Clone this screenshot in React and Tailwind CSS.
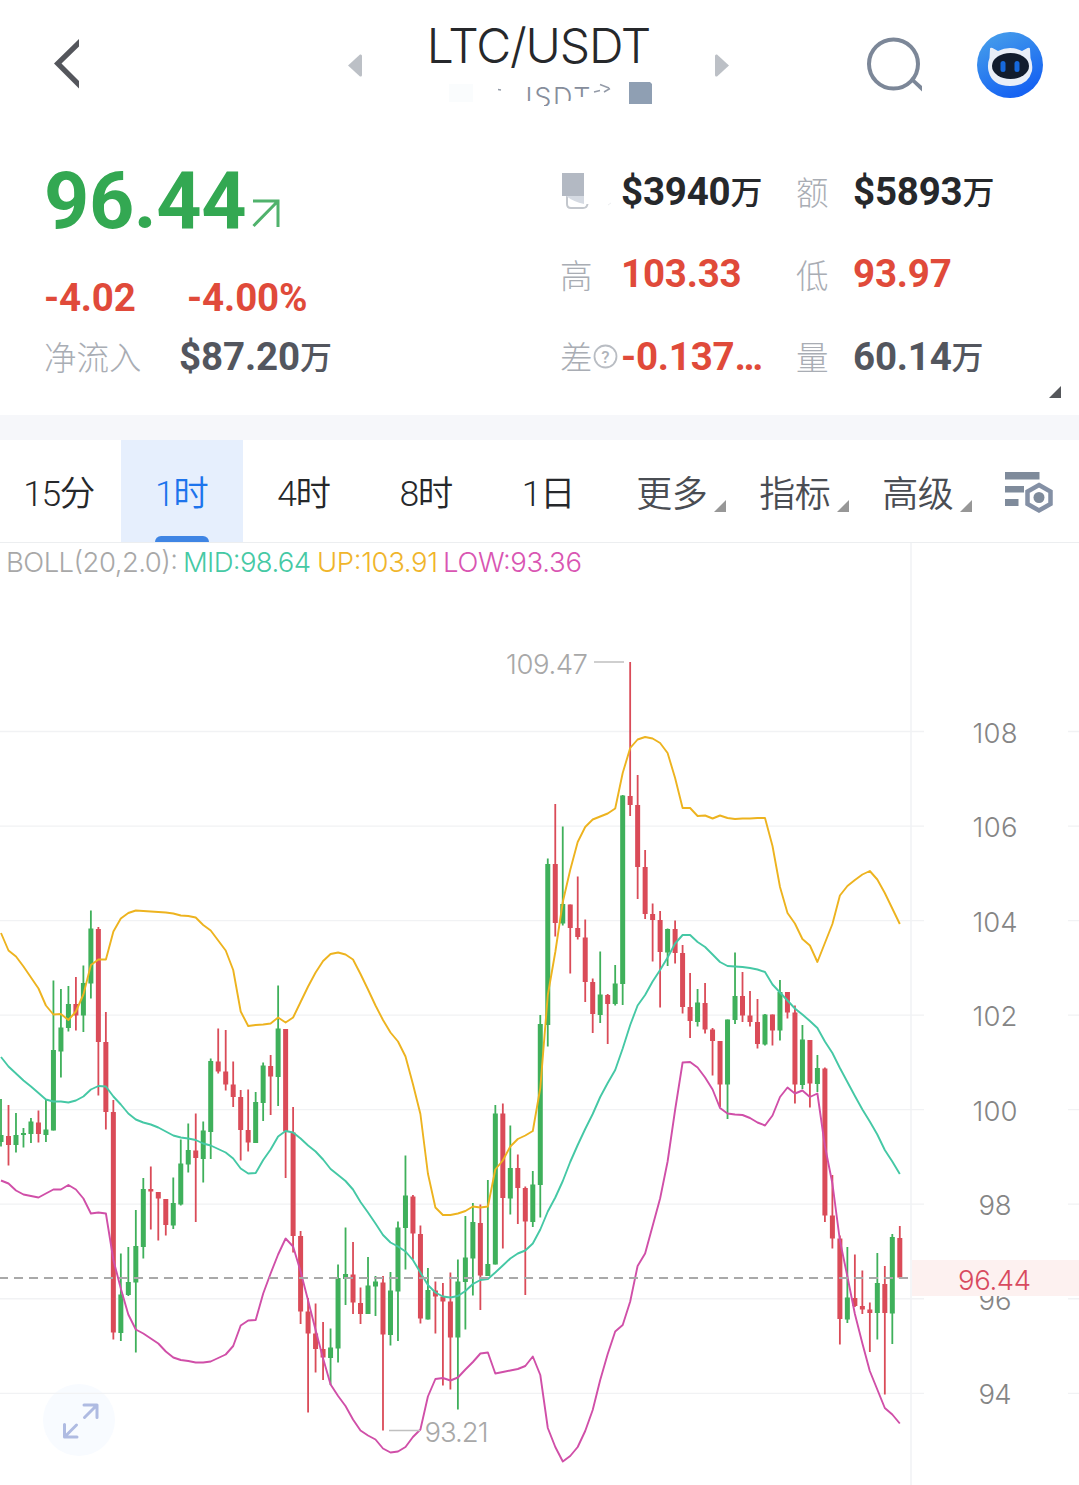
const tabs = ['15分', '1时', '4时', '8时', '1日'];
const menus = ['更多', '指标', '高级'];

// x of the first candle and the distance between two candles
const START = 1;
const STEP = 7.49;

// [direction, high, body top, body bottom, low]
const candles = [
  ['u', 1099, 1135, 1142, 1146.5], ['d', 1105, 1136, 1145, 1165.5], ['u', 1113, 1135, 1145, 1152.5],
  ['u', 1128, 1133, 1135, 1147.5], ['u', 1118, 1121.5, 1134, 1143], ['d', 1110.5, 1122.5, 1134, 1142.5],
  ['u', 1100, 1129.5, 1135, 1142], ['u', 980.5, 1050, 1130.5, 1130.5], ['u', 989, 1027.5, 1051.5, 1077.5],
  ['u', 986, 1004, 1028, 1031.5], ['d', 977, 1004, 1015.5, 1030.5], ['u', 965.5, 983, 1015.5, 1032],
  ['u', 910.5, 928.5, 983.5, 998.5], ['d', 927, 929, 1042, 1095.5], ['d', 1012, 1042, 1112, 1129.5],
  ['d', 1100, 1112, 1332.5, 1339.5], ['u', 1253.5, 1294.5, 1333, 1341], ['u', 1247, 1282, 1295, 1296],
  ['u', 1210, 1246, 1282.5, 1352.5], ['u', 1178, 1189, 1247, 1258.5], ['d', 1166.5, 1189, 1191.5, 1229.5],
  ['d', 1192, 1192, 1198.5, 1240.5], ['d', 1199, 1199, 1225, 1235.5], ['u', 1177.5, 1203, 1225.5, 1229],
  ['u', 1139.5, 1163.5, 1204.5, 1205.5], ['u', 1123.5, 1150, 1164.5, 1172.5], ['d', 1113.5, 1150.5, 1158, 1222],
  ['u', 1121.5, 1130.5, 1159, 1182.5], ['u', 1058.5, 1061, 1132, 1159], ['d', 1028.5, 1061.5, 1071.5, 1073.5],
  ['d', 1030, 1071.5, 1084.5, 1090.5], ['d', 1061.5, 1084.5, 1097, 1107], ['d', 1090, 1097, 1130, 1160.5],
  ['d', 1089.5, 1130, 1142.5, 1151.5], ['u', 1092, 1102, 1143, 1143], ['u', 1062.5, 1065.5, 1103, 1121],
  ['d', 1055, 1066, 1076.5, 1115], ['u', 985.5, 1028.5, 1077, 1106], ['d', 1029, 1029, 1131.5, 1178],
  ['d', 1107, 1132.5, 1236, 1252.5], ['d', 1231, 1236, 1311.5, 1324], ['d', 1298, 1311.5, 1333.5, 1412.5],
  ['d', 1303.5, 1333.5, 1349, 1372.5], ['d', 1322, 1349, 1357.5, 1380], ['u', 1328.5, 1347.5, 1358, 1385],
  ['u', 1264.5, 1278, 1348.5, 1362.5], ['u', 1227.5, 1274, 1279, 1305], ['d', 1242, 1274.5, 1302.5, 1314],
  ['d', 1287.5, 1303, 1314, 1324], ['u', 1257, 1285.5, 1314, 1314], ['u', 1276, 1281.5, 1286.5, 1316],
  ['d', 1276, 1282.5, 1334.5, 1430.5], ['u', 1272, 1290.5, 1335, 1345.5], ['u', 1221.5, 1227.5, 1291.5, 1341],
  ['u', 1155.5, 1195.5, 1228, 1269.5], ['d', 1195, 1196.5, 1233.5, 1259.5], ['d', 1225.5, 1234, 1318.5, 1323.5],
  ['u', 1268, 1290, 1319.5, 1319.5], ['d', 1281.5, 1290.5, 1296.5, 1333.5], ['d', 1283, 1296.5, 1301.5, 1385.5],
  ['d', 1272.5, 1301.5, 1337.5, 1389.5], ['u', 1259.5, 1281.5, 1337.5, 1409.5], ['u', 1216, 1257.5, 1282, 1329.5],
  ['u', 1203, 1222, 1258.5, 1295.5], ['d', 1204.5, 1223, 1275.5, 1310], ['u', 1180, 1264, 1276, 1276],
  ['u', 1105, 1113.5, 1264.5, 1264.5], ['d', 1103.5, 1113.5, 1198, 1248.5], ['u', 1125.5, 1168, 1198.5, 1214.5],
  ['d', 1154.5, 1168, 1188, 1224], ['d', 1186.5, 1188, 1221.5, 1295], ['u', 1171, 1184.5, 1222, 1227],
  ['u', 1015, 1024, 1185, 1217.5], ['u', 858.5, 864, 1025, 1046.5], ['d', 804, 864, 923, 936.5],
  ['u', 826.5, 904, 923.5, 925.5], ['d', 904.5, 904.5, 928, 973.5], ['d', 876.5, 928, 937, 939.5],
  ['d', 919.5, 937.5, 982, 1002], ['d', 978.5, 982, 1014, 1033], ['u', 951.5, 994.5, 1015, 1023],
  ['d', 994, 995, 1004, 1044], ['u', 965, 983.5, 1004, 1005.5], ['u', 795, 795.5, 984, 1005],
  ['d', 662, 796, 805, 816], ['d', 775, 805, 867, 899], ['d', 850, 867, 914, 919],
  ['d', 903.5, 914, 920, 961.5], ['d', 911, 920, 952, 1007.5], ['u', 928.5, 929, 952.5, 966],
  ['d', 920.5, 929, 953, 963.5], ['d', 945, 953, 1007, 1013.5], ['d', 973, 1007, 1021, 1038],
  ['u', 989, 1002.5, 1022, 1026.5], ['d', 983, 1003, 1029.5, 1033.5], ['d', 1028, 1029.5, 1041, 1075.5],
  ['d', 1041, 1041, 1084.5, 1107], ['u', 1019.5, 1019.5, 1084.5, 1119], ['u', 952.5, 996, 1020, 1024],
  ['d', 972, 996, 1015.5, 1022], ['d', 991, 1015.5, 1022, 1026.5], ['d', 999, 1022, 1044, 1048.5],
  ['u', 1014, 1014.5, 1044.5, 1045.5], ['d', 1014.5, 1014.5, 1030.5, 1045.5], ['u', 980, 992, 1030.5, 1040.5],
  ['d', 992, 992, 1012.5, 1018.5], ['d', 1005.5, 1012.5, 1084.5, 1103.5], ['u', 1025, 1039.5, 1085, 1089],
  ['d', 1040, 1040, 1083.5, 1107.5], ['u', 1055, 1068, 1084, 1092], ['d', 1067.5, 1068.5, 1215.5, 1222],
  ['d', 1175, 1215.5, 1238.5, 1248.5], ['d', 1235.5, 1238.5, 1319, 1344.5], ['u', 1247, 1297.5, 1319.5, 1323],
  ['d', 1254.5, 1298, 1306, 1307], ['d', 1270.5, 1306, 1309.5, 1314], ['d', 1302.5, 1309.5, 1313, 1352],
  ['u', 1253, 1283, 1313, 1339.5], ['d', 1266, 1284, 1313, 1394.5], ['u', 1234, 1237, 1313.5, 1344],
  ['d', 1226, 1238, 1277.5, 1279],
];

const upper = [
  933, 950.5, 956.5, 966.5, 977.5, 988.5, 1005.5, 1014.5, 1014, 1020, 1011.5, 994.5, 965, 959.5, 959.5, 931.5, 918.5, 913,
  910.5, 911, 911.5, 912, 912.5, 913.5, 915.5, 916, 917.5, 925, 930.5, 940.5, 950.5, 970, 1011.5, 1026, 1025, 1024.5, 1023.5,
  1017.5, 1022.5, 1017.5, 1002, 986.5, 972.5, 961, 954, 952.5, 954.5, 959.5, 974, 989.5, 1005.5, 1020, 1032.5, 1041.5, 1056.5,
  1084, 1114, 1173.5, 1207.5, 1215, 1215, 1213.5, 1211, 1206.5, 1207.5, 1206.5, 1169.5, 1160.5, 1146.5, 1139, 1135.5, 1131,
  1088, 995, 952, 902, 870, 842, 827, 819.5, 816.5, 813.5, 808.5, 773, 748, 739.5, 737, 738.5, 743, 753, 778, 808, 808,
  816, 815.5, 818.5, 815.5, 818, 819, 818.5, 818.5, 818, 818, 846, 887, 913, 923.5, 939, 945.5, 962, 943, 924, 895.5, 886,
  880, 874.5, 871, 879.5, 893, 908.5, 924,
];

const middle = [
  1057, 1066.5, 1073.5, 1080.5, 1086.5, 1093, 1099.5, 1101.5, 1101.5, 1102.5, 1100.5, 1096.5, 1089.5, 1086, 1086.5, 1096.5,
  1104.5, 1113.5, 1119.5, 1122.5, 1124.5, 1127.5, 1131.5, 1135.5, 1137.5, 1138.5, 1140, 1143.5, 1145.5, 1149, 1152.5, 1158.5,
  1168.5, 1173.5, 1173, 1160, 1149.5, 1136.5, 1131, 1132.5, 1138.5, 1145.5, 1151.5, 1159.5, 1169, 1175, 1181, 1189.5, 1202,
  1212.5, 1223.5, 1235, 1242.5, 1246.5, 1251.5, 1260, 1272.5, 1285, 1292.5, 1296.5, 1297.5, 1296, 1291, 1284, 1280, 1279,
  1272.5, 1265.5, 1258.5, 1253.5, 1250.5, 1243.5, 1229.5, 1211.5, 1197.5, 1181, 1162, 1145, 1129, 1114, 1097, 1083, 1070,
  1048.5, 1025, 1005.5, 995, 981.5, 970, 957.5, 943.5, 935, 935, 942, 947, 954.5, 962, 966, 966.5, 967, 968, 969.5, 972,
  984.5, 992.5, 1000.5, 1008.5, 1014.5, 1021, 1028, 1041.5, 1053, 1068, 1082, 1096, 1109.5, 1121.5, 1134.5, 1150, 1161.5, 1174,
];

const lower = [
  1180.5, 1183.5, 1190.5, 1194.5, 1196, 1197.5, 1193.5, 1189.5, 1189.5, 1185, 1189.5, 1198.5, 1213.5, 1212.5, 1213.5, 1260,
  1288.5, 1314.5, 1329.5, 1333.5, 1338.5, 1343.5, 1351.5, 1357.5, 1360, 1361, 1362.5, 1362.5, 1361.5, 1358, 1354.5, 1346,
  1325.5, 1320.5, 1320, 1293.5, 1273.5, 1254.5, 1238.5, 1246.5, 1271.5, 1300.5, 1330, 1358.5, 1384.5, 1396, 1406, 1419.5,
  1430.5, 1435.5, 1439.5, 1448.5, 1452.5, 1451.5, 1447, 1437, 1429.5, 1396.5, 1379, 1378, 1380.5, 1377.5, 1369.5, 1362,
  1353.5, 1352.5, 1373.5, 1372, 1370.5, 1369, 1366, 1356.5, 1375, 1428, 1447, 1461.5, 1456, 1447, 1431, 1410, 1380, 1354, 1331.5,
  1325, 1301.5, 1266, 1253.5, 1226, 1198.5, 1161.5, 1110, 1062.5, 1062, 1067.5, 1077.5, 1089.5, 1108, 1113.5, 1114.5, 1115,
  1118, 1122.5, 1125.5, 1115.5, 1097, 1087.5, 1093.5, 1090.5, 1097, 1093.5, 1146, 1183.5, 1240.5, 1276.5, 1314, 1343.5, 1371,
  1389.5, 1408, 1414.5, 1423.5,
];

const levels = [108, 106, 104, 102, 100, 98, 96, 94];
const levelY = (level) => 731.5 + (108 - level) * 47.27;
const toPoints = (values) => values.map((y, i) => `${(START + i * STEP).toFixed(1)},${y}`).join(' ');

function Header() {
  return (
    <header className="flex h-[130px] items-start">
      <svg className="mt-[36px] ml-[50px]" width="34" height="56" viewBox="50 36 34 56">
        <path d="M79 39V46.500L61.500 63.500L79 81V88.500L54 63.500Z" fill="#54565c" />
      </svg>
      <svg className="mt-[54px] ml-[263px]" width="16" height="24" viewBox="0 0 16 24">
        <path d="M1 11.500L13 0.500Q15 0 15 2V21Q15 23 13 22.500Z" fill="#bcc0c6" />
      </svg>
      <div className="flex w-[351px] flex-col items-center pt-[18px]">
        <h1 className="font-[Inter] text-[48px] leading-[56px] font-light tracking-[-1.1px] whitespace-nowrap text-[#26282b]">LTC/USDT</h1>
        <svg className="mt-1 ml-[22px]" width="240" height="32" viewBox="430 78 240 32">
          <defs>
            <clipPath id="pair">
              <path d="M512 86H518V94H526V101H544V106H551V104H562V101H572V97H592V86Z" />
            </clipPath>
          </defs>
          <rect x="449" y="84" width="24" height="18" fill="#fafcfd" />
          <text x="512.500" y="107" fontSize="27" fontWeight="300" textLength="78" clipPath="url(#pair)" className="font-[Inter]" fill="#868d9b">USDT</text>
          <path d="M498 89.500L501 90M594 92L600 90.500M600 84.500L609 88M604 92L610 88.500" stroke="#949ba8" strokeWidth="1.500" fill="none" />
          <path d="M629 82H650L652 84V104H629Z" fill="#8f9fb3" />
        </svg>
      </div>
      <svg className="mt-[54px]" width="16" height="24" viewBox="0 0 16 24">
        <path d="M15 11.500L3 0.500Q1 0 1 2V21Q1 23 3 22.500Z" fill="#bcc0c6" />
      </svg>
      <svg className="mt-[34px] ml-[133px]" width="64" height="62" viewBox="863 34 64 62">
        <circle cx="893.500" cy="64" r="24.500" fill="none" stroke="#7c8798" strokeWidth="4" />
        <path d="M910.500 80.500L913 78L922 86V91.500Z" fill="#7c8798" />
      </svg>
      <svg className="mt-[32px] ml-[50px]" width="66" height="66" viewBox="977 32 66 66">
        <defs>
          <linearGradient id="bot" x1="0" y1="0" x2="0.500" y2="1">
            <stop offset="0" stopColor="#4aa3ea" />
            <stop offset="1" stopColor="#1663f2" />
          </linearGradient>
        </defs>
        <circle cx="1010" cy="65" r="33" fill="url(#bot)" />
        <path d="M990 49Q990 47 992.500 48L998 51Q1010 45 1022 51L1027.500 48Q1030 47 1030 49L1030.500 58Q1033 64 1032 71Q1028 86 1010 86Q992 86 988.500 71Q987 64 989.500 58Z" fill="#e9eef8" />
        <ellipse cx="1010.500" cy="66" rx="18.500" ry="13" fill="#121c2e" />
        <rect x="1000.500" y="61" width="5" height="11" rx="2.500" fill="#1668dc" />
        <rect x="1014.500" y="61" width="5" height="11" rx="2.500" fill="#1668dc" />
      </svg>
    </header>
  );
}

function Stat({ label, value, color }) {
  return (
    <div className="flex h-[82.5px] items-center whitespace-nowrap">
      <span className="flex h-full shrink-0 items-center pt-[7px] text-[32.5px] font-light text-[#a9adb4]">{label}</span>
      <span className={`pt-px text-[38.5px] font-bold tracking-[-0.2px] ${color}`}>{value}</span>
    </div>
  );
}

function Wan() {
  return <span className="relative -top-px text-[32px] font-medium">万</span>;
}

function Summary() {
  return (
    <section className="flex h-[285px]">
      <div className="w-[560px] pl-[44px]">
        <div className="flex h-[130px] items-start">
          <span className="mt-[21px] text-[79px] leading-[100px] font-bold tracking-[-0.4px] text-[#33a852]">96.44</span>
          <svg className="mt-[68px] ml-[6px]" width="30" height="30" viewBox="0 0 30 30" fill="none" stroke="#50b26c" strokeWidth="3">
            <path d="M1 3H26V29M26 3L1.500 28" />
          </svg>
        </div>
        <div className="flex h-[75px] items-center text-[38.5px] font-bold text-[#e04a3a]">
          <span className="w-[143px] tracking-[-0.2px]">-4.02</span>
          <span className="tracking-[-0.1px]">-4.00%</span>
        </div>
        <div className="flex h-[44px] items-center whitespace-nowrap">
          <span className="w-[135px] pt-[5px] text-[32.5px] font-light text-[#a9adb4]">净流入</span>
          <span className="text-[38.5px] font-bold tracking-[-0.1px] text-[#53565e]">$87.20<Wan /></span>
        </div>
      </div>
      <div className="w-[236px] pt-[20px] [&>div>span:first-child]:w-[61px]">
        <Stat
          label={
            <svg className="mb-[7px]" width="52" height="40" viewBox="560 170 52 40">
              <path d="M567 195V203Q567 207 571 207H583Q587 207 587.500 203" fill="none" stroke="#c3c7cd" strokeWidth="2" />
              <path d="M562 172H584V195H562Z" fill="#b3b9c3" />
              <path d="M566 195H584V203Q574 201 566 195Z" fill="#d5dae2" />
              <path d="M608 204L611 202" stroke="#eceef0" />
            </svg>
          }
          value={<>$3940<Wan /></>}
          color="text-[#26282b]"
        />
        <Stat label="高" value="103.33" color="text-[#e04a3a]" />
        <Stat
          label={
            <>
              差
              <svg className="-mt-[6px] shrink-0" width="25" height="25" viewBox="0 0 25 25">
                <circle cx="12.500" cy="12.500" r="11" fill="none" stroke="#b9bdc3" strokeWidth="1.800" />
                <text x="12.500" y="18.500" textAnchor="middle" fontSize="17" fontWeight="500" fill="#b0b4ba">?</text>
              </svg>
            </>
          }
          value="-0.137…"
          color="text-[#e04a3a]"
        />
      </div>
      <div className="w-[253px] pt-[20px] [&>div>span:first-child]:w-[57px]">
        <Stat label="额" value={<>$5893<Wan /></>} color="text-[#26282b]" />
        <Stat label="低" value="93.97" color="text-[#e04a3a]" />
        <Stat label="量" value={<>60.14<Wan /></>} color="text-[#53565e]" />
      </div>
      <svg className="mt-[256px]" width="12" height="12" viewBox="0 0 12 12">
        <path d="M12 0V12H0Z" fill="#55575b" />
      </svg>
    </section>
  );
}

function Tabs() {
  return (
    <nav className="flex h-[103px] items-stretch border-b border-[#eceef0] text-[36px] leading-none font-[350]">
      {tabs.map((tab, i) => (
        <button
          key={tab}
          className={`flex flex-col items-center pt-[36.5px] tracking-[-1.4px] ${i === 0 ? 'w-[121px] pr-1' : 'w-[122.3px] pr-[2px]'} ${
            tab === '1时' ? 'justify-between bg-[#e6effd] text-[#1d74ec]' : 'text-[#26282b]'
          }`}
        >
          <span className="text-[35.5px]">{tab}</span>
          {tab === '1时' && <span className="ml-[2px] h-[6px] w-[54px] rounded-t-[6px] bg-[#3f85e4]" />}
        </button>
      ))}
      <div className="ml-[26px] flex">
        {menus.map((menu) => (
          <button key={menu} className="flex w-[123px] items-start pt-[37px] text-[#4a4d53]">
            <span className="w-[78px] text-left tracking-[-0.5px] whitespace-nowrap">{menu}</span>
            <svg className="mt-[23px]" width="12" height="12" viewBox="0 0 12 12">
              <path d="M12 0V12H0Z" fill="#979797" />
            </svg>
          </button>
        ))}
      </div>
      <svg className="mt-[30px]" width="50" height="44" viewBox="1005 470 50 44">
        <path d="M1005 472H1039.500V479.500H1005ZM1005 486H1024V492.500H1005ZM1005 499H1018.500V506H1005Z" fill="#7f8b9b" />
        <path d="M1039 485L1050.500 491.500V504L1039 510.500L1027.500 504V491.500Z" fill="#fff" stroke="#8490a5" strokeWidth="4.500" />
        <circle cx="1039" cy="497.500" r="5.500" fill="#7f8b9b" />
      </svg>
    </nav>
  );
}

function Candle({ candle, index }) {
  const [direction, high, top, bottom, low] = candle;
  const x = START + index * STEP;
  return (
    <g fill={direction === 'u' ? '#3fb05b' : '#da4b58'}>
      <rect x={x - 0.9} y={high} width="1.8" height={low - high} />
      <rect x={x - 2.5} y={top} width="5" height={bottom - top} />
    </g>
  );
}

function Chart() {
  return (
    <svg className="block font-[Inter]" width="1079" height="942" viewBox="0 543 1079 942">
      <circle cx="79" cy="1420" r="36" fill="#f8fbff" />
      {levels.map((level) => (
        <g key={level}>
          <path d={`M0 ${levelY(level)}H924M1068 ${levelY(level)}H1079`} stroke="#f1f2f4" strokeWidth="1.3" />
          <text x="995" y={levelY(level) + 11} textAnchor="middle" fontSize="27.500" fontWeight="350" textLength={level > 99 ? 45 : 33} fill="#858585">
            {level}
          </text>
        </g>
      ))}
      <path d="M911 543V1485" stroke="#f1f2f4" strokeWidth="1.500" />

      <g fontSize="27.500" fontWeight="350">
        <text x="6" y="571.500" textLength="172" fill="#a8a8a8">BOLL(20,2.0):</text>
        <text x="183" y="571.500" textLength="128" fill="#45c9a4">MID:98.64</text>
        <text x="317" y="571.500" textLength="121" fill="#f0b52b">UP:103.91</text>
        <text x="443" y="571.500" textLength="139" fill="#d955b2">LOW:93.36</text>
      </g>

      {candles.map((candle, i) => <Candle key={i} candle={candle} index={i} />)}

      <g fill="none" strokeWidth="1.900" strokeLinejoin="round">
        <polyline points={toPoints(middle)} stroke="#45c8a5" />
        <polyline points={toPoints(upper)} stroke="#edb31f" />
        <polyline points={toPoints(lower)} stroke="#d04fa8" />
      </g>

      <path d="M-1 1278H908" stroke="#a9a9a9" strokeWidth="2" strokeDasharray="9 6" />
      <path d="M594 662H624M389 1430.500H420" stroke="#c0c0c0" strokeWidth="1.500" />
      <g fontSize="27.500" fontWeight="350" fill="#a8a8a8">
        <text x="506" y="673.500" textLength="82">109.47</text>
        <text x="424.500" y="1441.500" textLength="64">93.21</text>
      </g>

      <rect x="912" y="1260" width="167" height="36" fill="#fdf1f0" />
      <text x="958" y="1289.500" fontSize="27.500" fontWeight="350" textLength="73" fill="#d84a5f">96.44</text>

      <g fill="none" stroke="#afbbe2" strokeWidth="3" strokeLinecap="round" strokeLinejoin="round">
        <path d="M84 1405H97V1417.500M97 1405L84.500 1417.500" />
        <path d="M64.500 1424.500V1437H77M64.500 1437L76.500 1425" />
      </g>
    </svg>
  );
}

export default function App() {
  return (
    <main className="h-[1485px] w-[1079px] overflow-hidden bg-white font-[Roboto,'Noto_Sans_CJK_SC',sans-serif]">
      <Header />
      <Summary />
      <div className="h-[25px] bg-[#f6f7fa]" />
      <Tabs />
      <Chart />
    </main>
  );
}
